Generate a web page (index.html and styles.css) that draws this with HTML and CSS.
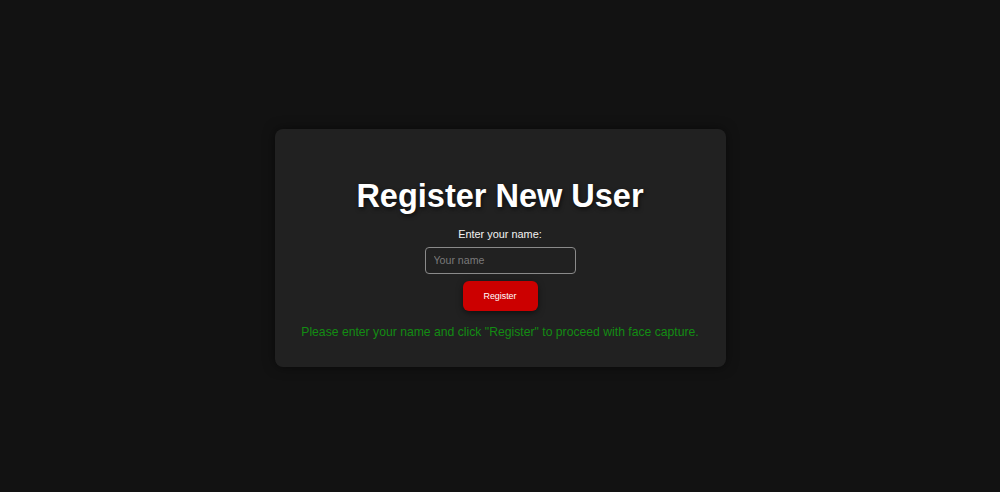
FILE: index.html
```html
<!DOCTYPE html>
<html lang="en">
<head>
<meta charset="utf-8">
<title>Register New User</title>
<link rel="stylesheet" href="styles.css">
</head>
<body>
<main class="card">
  <h1 class="title">Register New User</h1>
  <label class="label" for="name">Enter your name:</label>
  <input class="input" id="name" type="text" placeholder="Your name">
  <button class="btn" type="button">Register</button>
  <p class="status">Please enter your name and click "Register" to proceed with face capture.</p>
</main>
</body>
</html>
```

FILE: styles.css
```css
html, body {
  margin: 0;
  height: 100%;
}
body {
  background: #121212;
  font-family: "Liberation Sans", Arial, sans-serif;
  color: #fff;
  display: flex;
  align-items: center;
  justify-content: center;
}
.card {
  margin-top: 4px;
  background: #212121;
  border-radius: 8px;
  box-shadow: 0 0 12px rgba(0, 0, 0, 0.5);
  padding: 49px 27px 27px;
  display: flex;
  flex-direction: column;
  align-items: center;
  box-sizing: border-box;
  width: 451px;
  height: 238px;
}
.title {
  margin: 0;
  font-size: 32.5px;
  line-height: 37px;
  font-weight: bold;
  text-shadow: 1px 2px 4px rgba(0, 0, 0, 0.6);
}
.label {
  margin-top: 13px;
  font-size: 10.9px;
  line-height: 13px;
  color: #f2f2f2;
}
.input {
  margin-top: 6px;
  width: 151px;
  height: 27px;
  box-sizing: border-box;
  padding: 0 8px;
  background: transparent;
  border: 1px solid #8a8a8a;
  border-radius: 4px;
  font-family: inherit;
  font-size: 10.6px;
  color: #fff;
  outline: none;
}
.input::placeholder {
  color: #7a7a7a;
}
.btn {
  margin-top: 7px;
  width: 75px;
  height: 31px;
  border: none;
  border-radius: 6px;
  background: #cc0000;
  color: #fff;
  font-family: inherit;
  font-size: 8.9px;
  box-shadow: 0 2px 6px rgba(0, 0, 0, 0.5);
  cursor: pointer;
}
.status {
  margin: 14px 0 0;
  font-size: 12.2px;
  line-height: 15px;
  color: #138c13;
  white-space: nowrap;
}
```
